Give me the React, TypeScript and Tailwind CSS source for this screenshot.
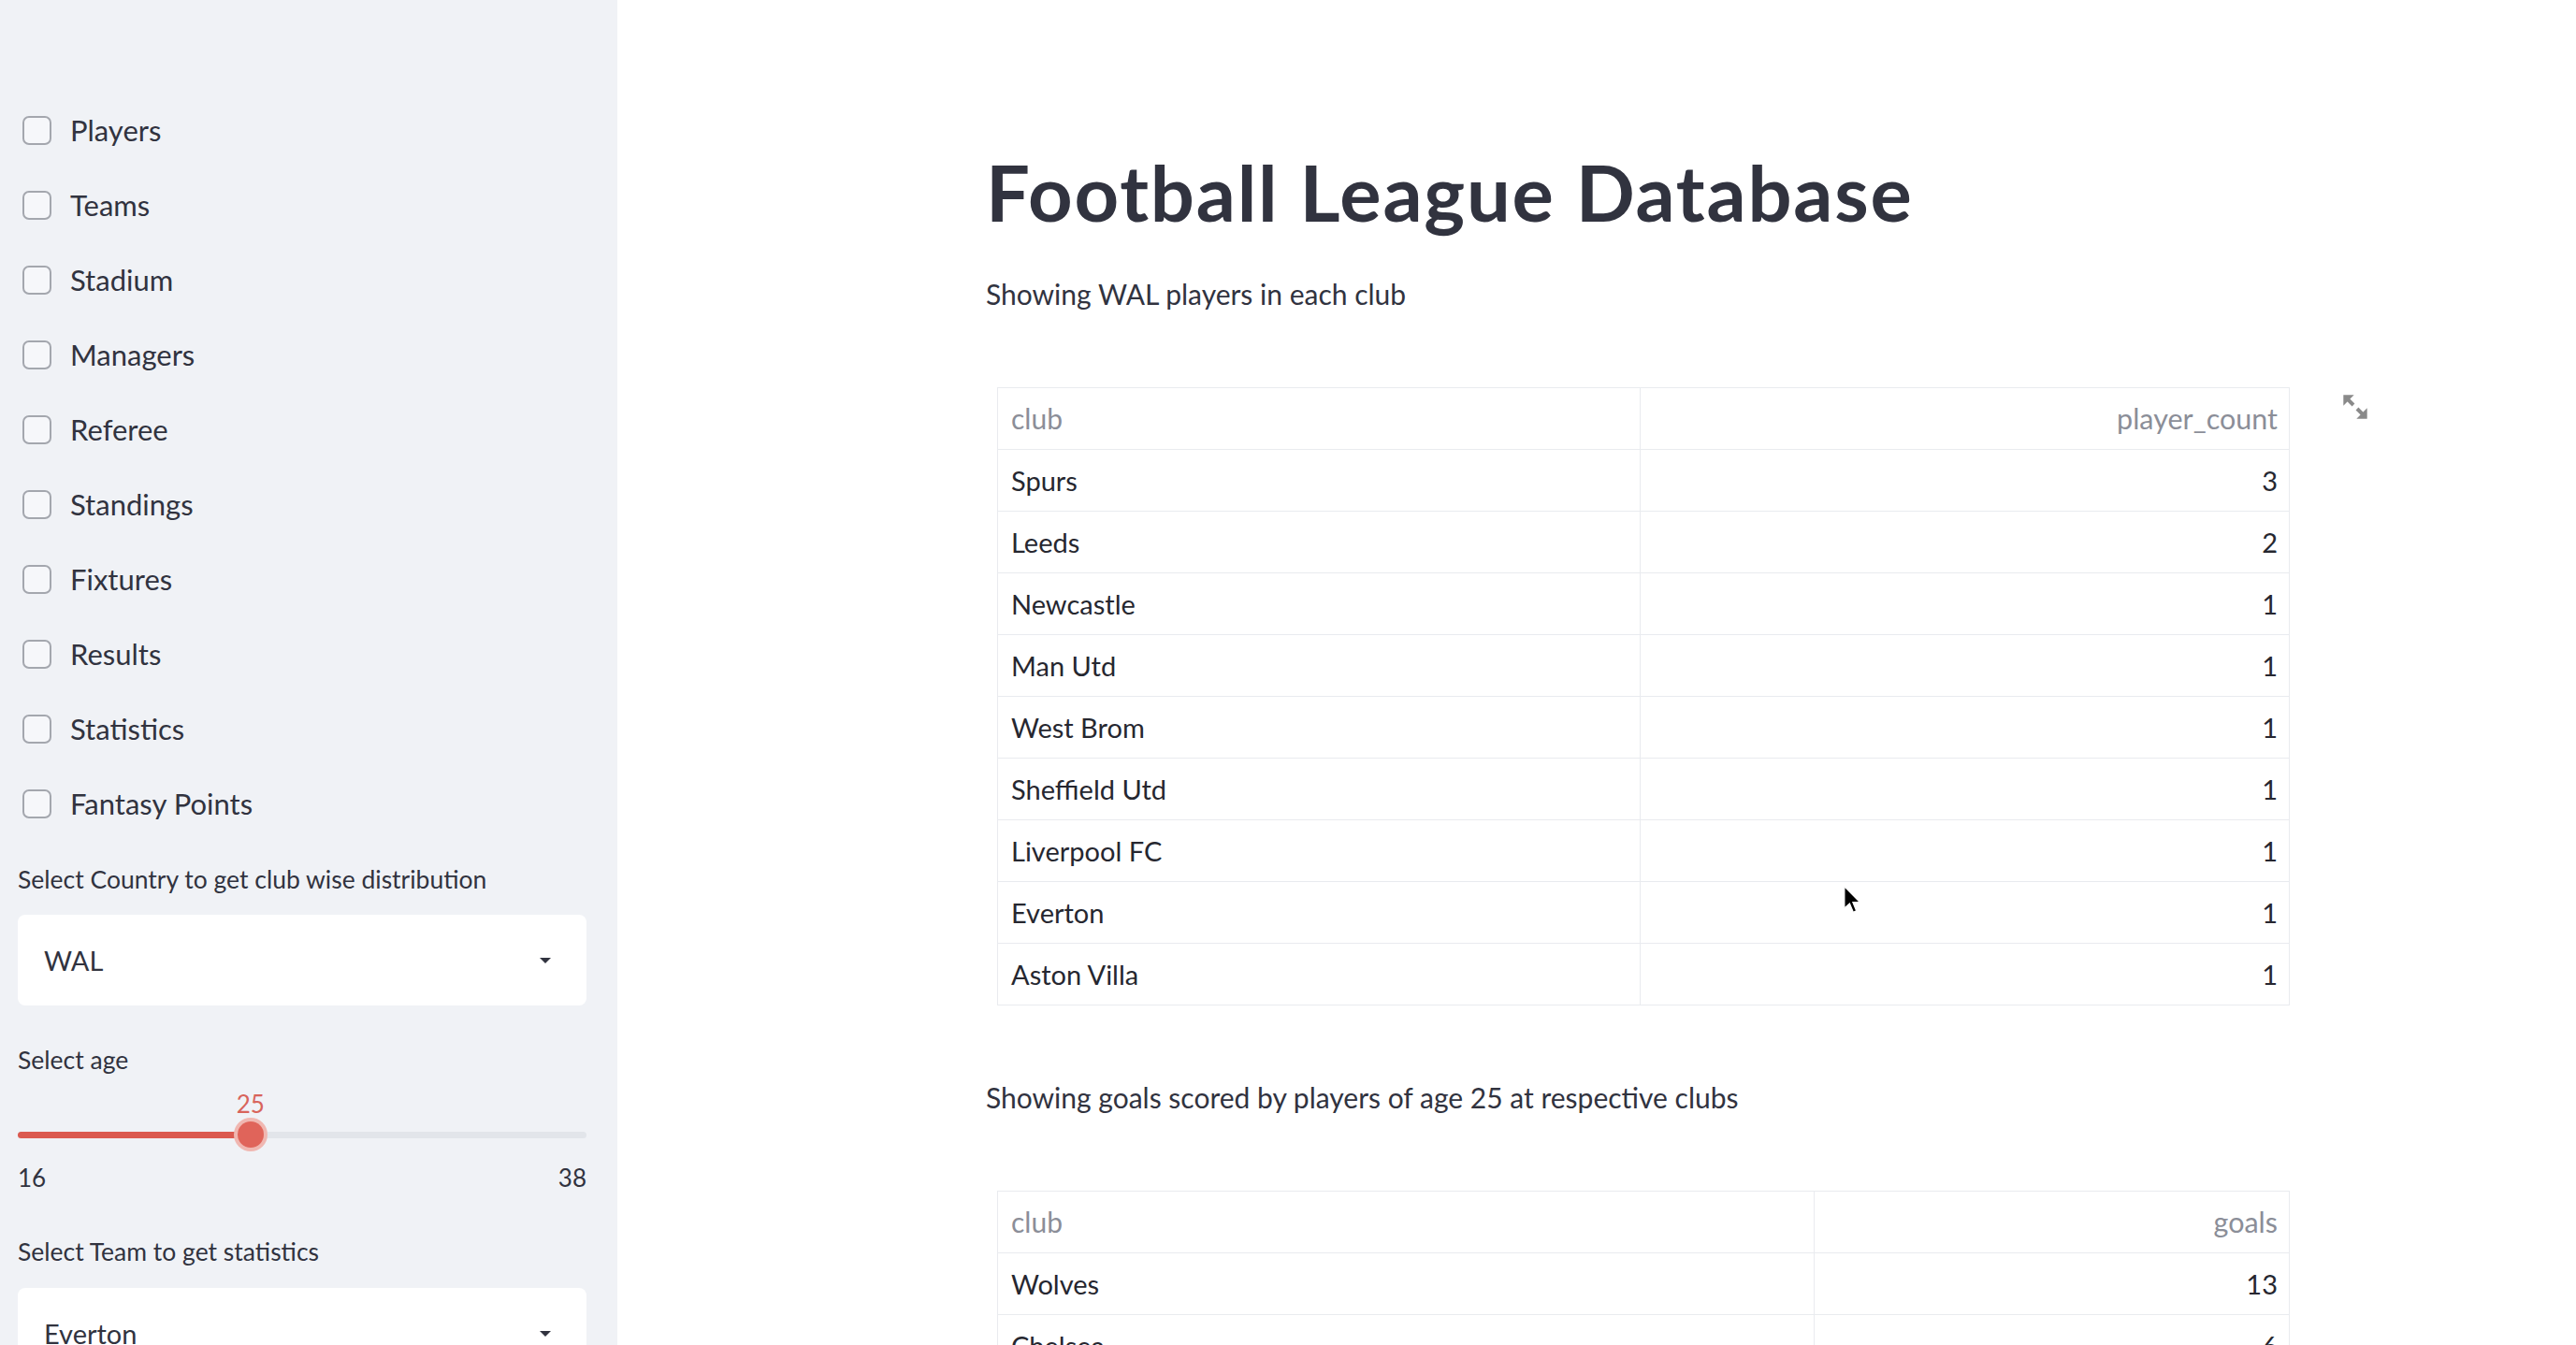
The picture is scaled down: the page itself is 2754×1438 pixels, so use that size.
import React from "react";

const menuItems = [
  "Players",
  "Teams",
  "Stadium",
  "Managers",
  "Referee",
  "Standings",
  "Fixtures",
  "Results",
  "Statistics",
  "Fantasy Points",
];

const walPlayers: [string, number][] = [
  ["Spurs", 3],
  ["Leeds", 2],
  ["Newcastle", 1],
  ["Man Utd", 1],
  ["West Brom", 1],
  ["Sheffield Utd", 1],
  ["Liverpool FC", 1],
  ["Everton", 1],
  ["Aston Villa", 1],
];

const goalsByClub: [string, number][] = [
  ["Wolves", 13],
  ["Chelsea", 6],
];

const Caret = () => (
  <svg width="14" height="8" viewBox="0 0 14 8">
    <path d="M1 1 L13 1 L7 7 Z" fill="#31333f" />
  </svg>
);

const SelectBox = ({ value }: { value: string }) => (
  <div className="flex items-center justify-between h-[97px] bg-white rounded-[8px] pl-[28px] pr-[37px] text-[29px] text-[#31333f]">
    <span>{value}</span>
    <Caret />
  </div>
);

const DataTable = ({
  header,
  rows,
  firstCol,
}: {
  header: string;
  rows: [string, number][];
  firstCol: string;
}) => (
  <table className="w-[1382px] border-collapse text-[29px]">
    <thead>
      <tr className="h-[66px]">
        <th
          className={`${firstCol} border border-[#e9ebef] px-[14px] text-left text-[30px] font-normal text-[#8b8e98]`}
        >
          club
        </th>
        <th className="border border-[#e9ebef] px-[12px] text-right text-[30.5px] font-normal text-[#8b8e98]">
          {header}
        </th>
      </tr>
    </thead>
    <tbody>
      {rows.map(([club, n], i) => (
        <tr key={i} className="h-[66px] text-[#262730]">
          <td className="border border-[#e9ebef] px-[14px]">{club}</td>
          <td className="border border-[#e9ebef] px-[12px] text-right">{n}</td>
        </tr>
      ))}
    </tbody>
  </table>
);

const ExpandIcon = () => (
  <svg width="32" height="32" viewBox="0 0 24 24">
    <path d="M2.5 2.5 L11 2.5 L2.5 11 Z" fill="#8a8a8a" />
    <path d="M5 5 L10.5 10.5" stroke="#8a8a8a" strokeWidth="3" />
    <path d="M21.5 21.5 L13 21.5 L21.5 13 Z" fill="#8a8a8a" />
    <path d="M19 19 L13.5 13.5" stroke="#8a8a8a" strokeWidth="3" />
  </svg>
);

export default function App() {
  const pct = ((25 - 16) / (38 - 16)) * 100;

  return (
    <div className="flex h-[1438px] w-[2754px] overflow-hidden bg-white font-['Lato','Source_Sans_Pro',sans-serif] text-[#31333f]">
      {/* sidebar */}
      <div className="w-[660px] shrink-0 bg-[#f0f2f6] pl-[19px] pr-[33px] pt-[99px]">
        <ul>
          {menuItems.map((label) => (
            <li key={label} className="flex h-[80px] items-center pl-[5px]">
              <div className="h-[31px] w-[31px] rounded-[7px] border-2 border-[#a4a7ae] bg-[#f6f7fa]" />
              <span className="ml-[20px] text-[31px] leading-none">{label}</span>
            </li>
          ))}
        </ul>

        <div className="mt-[22px] flex h-[40px] items-center text-[26.5px]">
          Select Country to get club wise distribution
        </div>
        <div className="mt-[17px]">
          <SelectBox value="WAL" />
        </div>

        <div className="mt-[39px] flex h-[40px] items-center text-[26.5px]">Select age</div>
        <div className="mt-[6px]">
          <div className="relative h-[40px]">
            <span
              className="absolute top-1/2 -translate-x-1/2 -translate-y-1/2 text-[26px] leading-none text-[#d8645b]"
              style={{ left: `${pct}%` }}
            >
              25
            </span>
          </div>
          <div className="relative flex h-[26px] items-center">
            <div className="h-[7px] w-full rounded-full bg-[#e2e5ea]">
              <div className="h-full rounded-full bg-[#db5a50]" style={{ width: `${pct}%` }} />
            </div>
            <div
              className="absolute top-1/2 h-[36px] w-[36px] -translate-x-1/2 -translate-y-1/2 rounded-full bg-[#f0b7b1] p-[4px]"
              style={{ left: `${pct}%` }}
            >
              <div className="h-full w-full rounded-full bg-[#e0645a]" />
            </div>
          </div>
          <div className="mt-[16px] flex h-[34px] items-center justify-between text-[26px]">
            <span>16</span>
            <span>38</span>
          </div>
        </div>

        <div className="mt-[43px] flex h-[40px] items-center text-[26.5px]">
          Select Team to get statistics
        </div>
        <div className="mt-[18px]">
          <SelectBox value="Everton" />
        </div>
      </div>

      {/* main */}
      <div className="relative flex-1 pl-[394px] pt-[164px]">
        <h1 className="h-[82px] text-[83px] font-bold leading-none tracking-[1.8px] text-[#31333f]">
          Football League Database
        </h1>

        <p className="mt-[48px] flex h-[40px] items-center text-[30px]">
          Showing WAL players in each club
        </p>

        <div className="mt-[80px] ml-[12px] flex items-start">
          <DataTable header="player_count" rows={walPlayers} firstCol="w-[687px]" />
          <div className="ml-[54px] mt-[5px]">
            <ExpandIcon />
          </div>
        </div>

        <p className="mt-[78px] flex h-[40px] items-center text-[30px]">
          Showing goals scored by players of age 25 at respective clubs
        </p>

        <div className="mt-[80px] ml-[12px]">
          <DataTable header="goals" rows={goalsByClub} firstCol="w-[873px]" />
        </div>

        {/* mouse pointer */}
        <svg
          className="absolute left-[1311px] top-[947px]"
          width="19"
          height="30"
          viewBox="0 0 12.5 20"
        >
          <path
            d="M0.5 0.5 L0.5 16 L4.2 12.6 L6.8 18.8 L9 17.9 L6.5 11.8 L11.5 11.8 Z"
            fill="#000"
            stroke="#fff"
            strokeWidth="0.8"
          />
        </svg>
      </div>
    </div>
  );
}
